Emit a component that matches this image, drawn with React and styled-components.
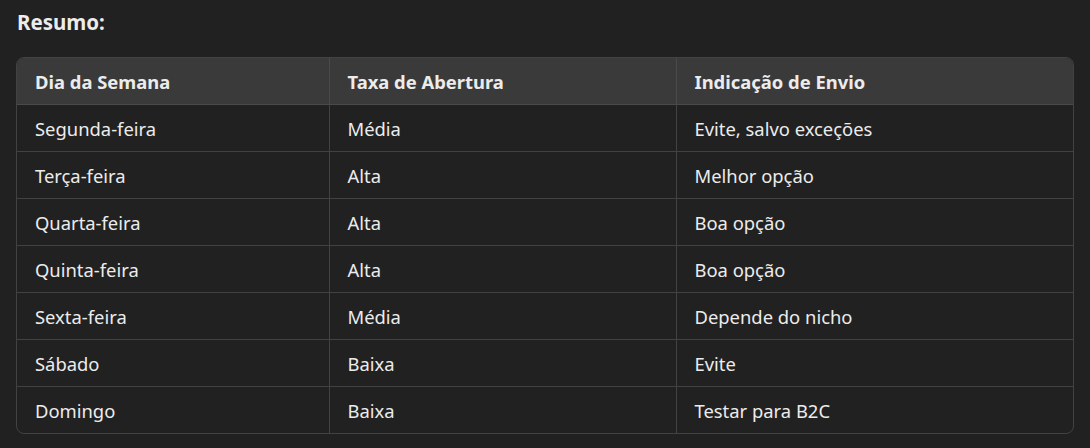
import React from "react";
import styled, { createGlobalStyle } from "styled-components";

const Global = createGlobalStyle`
  html, body { margin: 0; padding: 0; background: #212121; }
  body { font-family: "Noto Sans", "Open Sans", sans-serif; color: #ececec; }
`;

const Page = styled.div`
  padding: 8px 16px 0 16px;
  width: 1058px;
`;

const Title = styled.h3`
  margin: 0 0 21px 1px;
  font-size: 20.5px;
  font-weight: 700;
  line-height: 28px;
`;

const TableWrap = styled.div`
  border: 1px solid #424242;
  border-radius: 8px;
  overflow: hidden;
`;

const Table = styled.table`
  width: 100%;
  border-collapse: collapse;
  table-layout: fixed;
  font-size: 18.4px;
`;

const Col = styled.col`
  width: ${(p) => p.$w}px;
`;

const Th = styled.th`
  background: #3a3a3a;
  text-align: left;
  font-weight: 700;
  height: 46px;
  padding: 0 18px;
  border-left: 1px solid #4a4a4a;
  border-bottom: 1px solid #4a4a4a;
  &:first-child { border-left: none; }
`;

const Td = styled.td`
  height: 46px;
  padding: 0 18px;
  border-left: 1px solid #424242;
  border-top: 1px solid #424242;
  &:first-child { border-left: none; }
`;

const headers = [
  ["Dia da Semana", 312],
  ["Taxa de Abertura", 347],
  ["Indicação de Envio", 397],
];

const rows = [
  ["Segunda-feira", "Média", "Evite, salvo exceções"],
  ["Terça-feira", "Alta", "Melhor opção"],
  ["Quarta-feira", "Alta", "Boa opção"],
  ["Quinta-feira", "Alta", "Boa opção"],
  ["Sexta-feira", "Média", "Depende do nicho"],
  ["Sábado", "Baixa", "Evite"],
  ["Domingo", "Baixa", "Testar para B2C"],
];

export default function App() {
  return (
    <>
      <Global />
      <Page>
        <Title>Resumo:</Title>
        <TableWrap>
          <Table>
            <colgroup>
              {headers.map(([h, w]) => (
                <Col key={h} $w={w} />
              ))}
            </colgroup>
            <thead>
              <tr>
                {headers.map(([h]) => (
                  <Th key={h}>{h}</Th>
                ))}
              </tr>
            </thead>
            <tbody>
              {rows.map((r) => (
                <tr key={r[0]}>
                  {r.map((c, i) => (
                    <Td key={i}>{c}</Td>
                  ))}
                </tr>
              ))}
            </tbody>
          </Table>
        </TableWrap>
      </Page>
    </>
  );
}
